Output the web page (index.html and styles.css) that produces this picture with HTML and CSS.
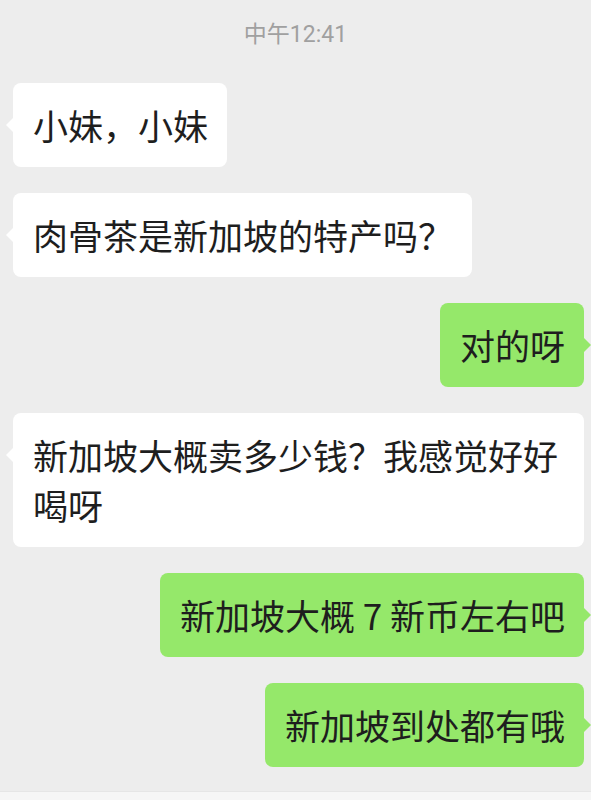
FILE: index.html
```html
<!DOCTYPE html>
<html lang="zh-CN">
<head>
<meta charset="utf-8">
<title>聊天</title>
<link rel="stylesheet" href="styles.css">
</head>
<body>
<main class="chat">
  <div class="time">中午12:41</div>
  <div class="messages">
    <div class="row in"><div class="bubble">小妹，小妹</div></div>
    <div class="row in"><div class="bubble">肉骨茶是新加坡的特产吗？</div></div>
    <div class="row out"><div class="bubble">对的呀</div></div>
    <div class="row in"><div class="bubble">新加坡大概卖多少钱？我感觉好好喝呀</div></div>
    <div class="row out"><div class="bubble">新加坡大概 7 新币左右吧</div></div>
    <div class="row out"><div class="bubble">新加坡到处都有哦</div></div>
  </div>
</main>
<footer class="inputbar"></footer>
</body>
</html>
```

FILE: styles.css
```css
html, body {
  margin: 0;
  padding: 0;
}
body {
  background: #ededed;
  font-family: "Noto Sans CJK SC", "Noto Sans", sans-serif;
  color: #1e1e1e;
  min-height: 100vh;
  display: flex;
  flex-direction: column;
  overflow: hidden;
}
.chat {
  flex: 1;
  display: flex;
  flex-direction: column;
}
.time {
  text-align: center;
  font-family: Roboto, "Noto Sans CJK SC", sans-serif;
  font-size: 23px;
  line-height: 30px;
  color: #a0a0a0;
  padding-top: 20px;
  margin-bottom: 33px;
}
.messages {
  display: flex;
  flex-direction: column;
  gap: 26px;
  padding: 0 7px 0 13px;
}
.row {
  display: flex;
}
.row.in {
  justify-content: flex-start;
}
.row.out {
  justify-content: flex-end;
}
.bubble {
  position: relative;
  font-size: 35px;
  line-height: 50px;
  padding: 17px 19px 17px 20px;
  border-radius: 8px;
  background: #ffffff;
  max-width: 100%;
  box-sizing: border-box;
}
.row.out .bubble {
  background: #95e86a;
}
.bubble::before {
  content: "";
  position: absolute;
  top: 35px;
  width: 0;
  height: 0;
  border-top: 7px solid transparent;
  border-bottom: 7px solid transparent;
}
.row.in .bubble::before {
  left: -7px;
  border-right: 7px solid #ffffff;
}
.row.out .bubble::before {
  right: -7px;
  border-left: 7px solid #95e86a;
}
.inputbar {
  height: 8px;
  background: #f6f6f6;
  border-top: 1px solid #e6e6e6;
}
```
